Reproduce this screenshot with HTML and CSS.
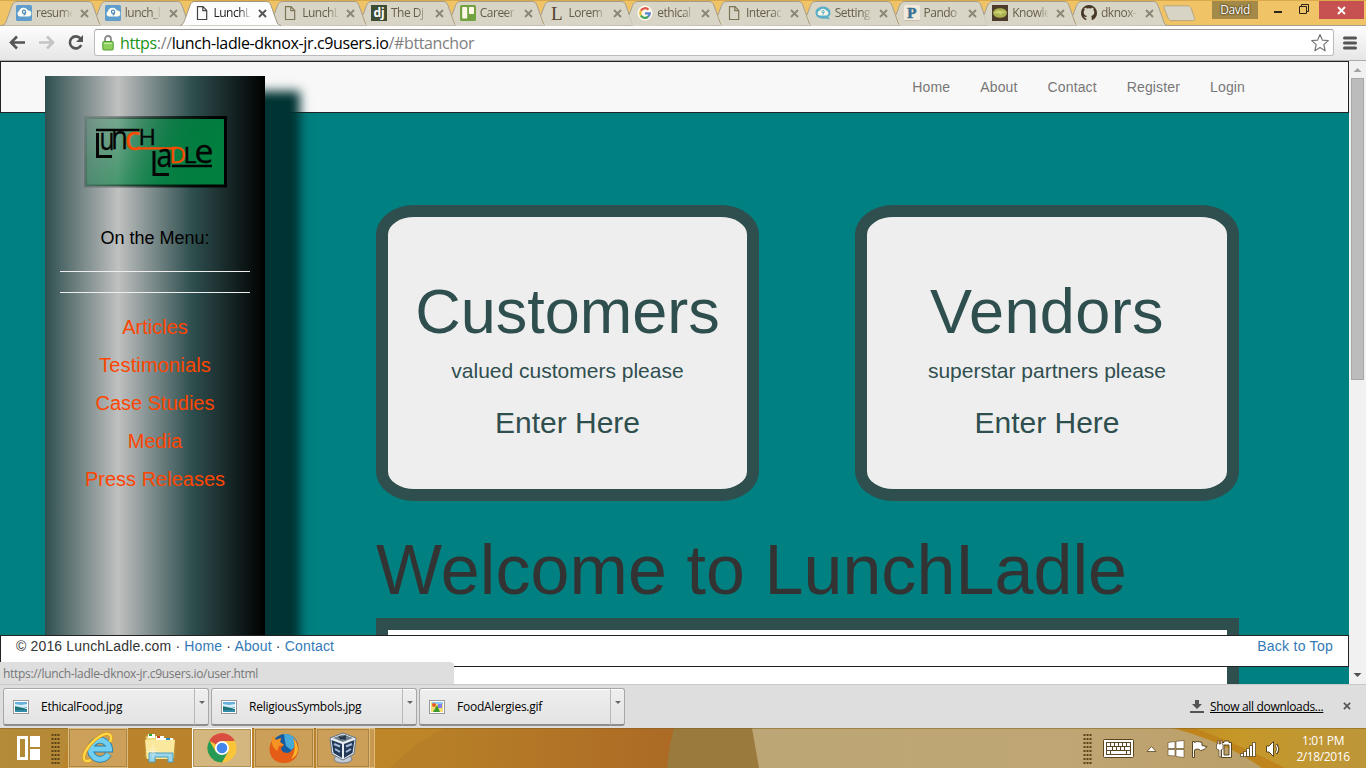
FILE: index.html
```html
<!DOCTYPE html>
<html lang="en">
<head>
<meta charset="utf-8">
<title>LunchLadle</title>
<link rel="stylesheet" href="styles.css">
</head>
<body>
<svg class="defs" width="0" height="0">
  <defs>
    <symbol id="tab-full" viewBox="0 0 101 25"><path d="M0 24.5C3 24 3.500 22 4.500 19.500L10 4.500C11 2 12 .5 15 .5H86C89 .5 90 2 91 4.500L96.500 20C97.500 23 98 24 101 24.500"/></symbol>
    <symbol id="tab-part" viewBox="0 0 101 25"><path d="M10 25L6 14 9.500 4.500C10.500 2 12 .5 15 .5H86C89 .5 90 2 91 4.500L96.500 20C97.500 23 98 24 101 24.500" stroke="none"/><path d="M6 14L9.500 4.500C10.500 2 12 .5 15 .5H86C89 .5 90 2 91 4.500L96.500 20C97.500 23 98 24 101 24.500" fill="none"/></symbol>
    <symbol id="close" viewBox="0 0 9 9"><path d="M1 1L8 8M8 1L1 8" stroke="currentColor" stroke-width="1.900"/></symbol>
    <symbol id="doc" viewBox="0 0 16 16"><path d="M3.500 1.700H9L12.700 5.500V14.500H3.500ZM8.800 1.700V5.700H12.700" fill="none" stroke="currentColor" stroke-width="1.200"/></symbol>
    <symbol id="cloud9" viewBox="0 0 16 16"><rect width="16" height="16" rx="1.500" fill="#5f9dcc"/><path d="M3.500 11.500A2.900 2.900 0 0 1 3 6.200 4.800 4.800 0 0 1 12 5.500 3 3 0 0 1 12.500 11.500Z" fill="#fffdf0"/><circle cx="8" cy="6.700" r="1.600" fill="none" stroke="#4a8abf" stroke-width="1.200"/><path d="M9.600 7C9.500 9 9 10 7.500 10" fill="none" stroke="#4a8abf" stroke-width="1.200"/></symbol>
    <symbol id="picture" viewBox="0 0 16 14"><rect x=".5" y=".5" width="15" height="13" fill="#fff" stroke="#999"/><path d="M2 2H14V8H2Z" fill="#67b3dd"/><path d="M2 4L8 5 14 4V7L8 8 2 6Z" fill="#d9eef7"/><path d="M2 6.500L6 7 14 9V12H2Z" fill="#207478"/><path d="M2 10H14V12H2Z" fill="#328baa"/></symbol>
    <symbol id="grip" viewBox="0 0 9 32"><path d="M1.500 1V32M4.500 1V32M7.500 1V32" stroke="#5c4316" stroke-width="2" stroke-dasharray="2 2"/></symbol>
  </defs>
</svg>
<div class="window">
  <header class="tabstrip">
    <div class="tabs">
      <div class="tab"><svg class="shape"><use href="#tab-full"/></svg><svg class="fav"><use href="#cloud9"/></svg><span>resume</span><svg class="x"><use href="#close"/></svg></div>
      <div class="tab"><svg class="shape"><use href="#tab-part"/></svg><svg class="fav"><use href="#cloud9"/></svg><span>lunch_l</span><svg class="x"><use href="#close"/></svg></div>
      <div class="tab active"><svg class="shape"><use href="#tab-full"/></svg><svg class="fav"><use href="#doc"/></svg><span>LunchL</span><svg class="x"><use href="#close"/></svg></div>
      <div class="tab"><svg class="shape"><use href="#tab-part"/></svg><svg class="fav"><use href="#doc"/></svg><span>LunchL</span><svg class="x"><use href="#close"/></svg></div>
      <div class="tab"><svg class="shape"><use href="#tab-part"/></svg><svg class="fav" viewBox="0 0 16 16"><rect width="16" height="16" fill="#3d4c33"/><text x="2.500" y="12" font-family="Open Sans,sans-serif" font-weight="700" font-size="12" fill="#fff">dj</text></svg><span>The Dj</span><svg class="x"><use href="#close"/></svg></div>
      <div class="tab"><svg class="shape"><use href="#tab-part"/></svg><svg class="fav" viewBox="0 0 16 16"><rect width="16" height="16" rx="1.500" fill="#72a23f"/><rect x="2.200" y="2" width="5" height="11.500" rx=".7" fill="#fff8e8"/><rect x="9" y="2" width="5" height="7" rx=".7" fill="#fff8e8"/></svg><span>Career</span><svg class="x"><use href="#close"/></svg></div>
      <div class="tab"><svg class="shape"><use href="#tab-part"/></svg><svg class="fav" viewBox="0 0 16 16"><text x="2" y="14.500" font-family="Liberation Serif,serif" font-size="19" fill="#53432f">L</text></svg><span>Lorem</span><svg class="x"><use href="#close"/></svg></div>
      <div class="tab"><svg class="shape"><use href="#tab-part"/></svg><svg class="fav" viewBox="0 0 16 16"><circle cx="8" cy="8" r="7.500" fill="#fff8ec"/><g fill="none" stroke-width="2.300"><path d="M11.400 4.600A4.800 4.800 0 0 0 3.900 5.600" stroke="#df5642"/><path d="M3.900 5.600A4.800 4.800 0 0 0 3.900 10.500" stroke="#edba32"/><path d="M3.900 10.500A4.800 4.800 0 0 0 11.200 11.600" stroke="#44a35a"/><path d="M11.200 11.600A4.800 4.800 0 0 0 12.800 8.300H8" stroke="#5586d1"/></g></svg><span>ethical</span><svg class="x"><use href="#close"/></svg></div>
      <div class="tab"><svg class="shape"><use href="#tab-part"/></svg><svg class="fav"><use href="#doc"/></svg><span>Interac</span><svg class="x"><use href="#close"/></svg></div>
      <div class="tab"><svg class="shape"><use href="#tab-part"/></svg><svg class="fav" viewBox="0 0 16 16"><path d="M8 1.500C12 1.500 15.500 4 15.500 7.500 15.500 9.500 14.700 10.800 13.300 12L15 14.500 10.500 13.500C5 14.500.5 12 .5 7.500.5 4 4 1.500 8 1.500Z" fill="#5aaec6"/><path d="M4.500 10.500A2.400 2.400 0 0 1 4.500 5.800 4 4 0 0 1 11.500 5.800 2.400 2.400 0 0 1 11.500 10.500Z" fill="#f8f4e6"/><circle cx="8" cy="6.700" r="1.200" fill="none" stroke="#5aaec6"/><path d="M9 7L8 9.500" stroke="#5aaec6"/></svg><span>Setting</span><svg class="x"><use href="#close"/></svg></div>
      <div class="tab"><svg class="shape"><use href="#tab-part"/></svg><svg class="fav" viewBox="0 0 16 16"><rect width="16" height="16" rx="2" fill="#f1e9dc"/><path d="M.5 15.500H15.500" stroke="#c8bdac"/><text x="3.200" y="13" font-family="Liberation Serif,serif" font-weight="700" font-size="15" fill="#397191" stroke="#397191" stroke-width=".6">P</text></svg><span>Pando</span><svg class="x"><use href="#close"/></svg></div>
      <div class="tab"><svg class="shape"><use href="#tab-part"/></svg><svg class="fav" viewBox="0 0 16 16"><rect width="16" height="16" fill="#4a3b2b"/><ellipse cx="8" cy="8" rx="7" ry="4.800" fill="#aab34f"/><path d="M1 8L6 5.500 15 7 10 8 9 10 7 8.500Z" fill="#ced375"/></svg><span>Knowle</span><svg class="x"><use href="#close"/></svg></div>
      <div class="tab"><svg class="shape"><use href="#tab-part"/></svg><svg class="fav" viewBox="0 0 16 16"><path d="M5.300 15.300C2.200 14.200 0 11.400 0 8A8 8 0 0 1 16 8C16 11.400 13.800 14.200 10.700 15.300V12.500C10.700 11.700 10.500 11.200 10.100 10.900 12 10.600 13.300 9.700 13.300 7.300 13.300 6.300 13 5.500 12.400 4.900 12.500 4.500 12.700 3.700 12.300 2.800 11.500 2.700 10.500 3.300 10 3.600A8 8 0 0 0 6 3.600C5.500 3.300 4.500 2.700 3.700 2.800 3.300 3.700 3.500 4.500 3.600 4.900 3 5.500 2.700 6.300 2.700 7.300 2.700 9.700 4 10.600 5.900 10.900 5.600 11.200 5.400 11.600 5.300 12 4 12.500 3.500 11.500 2.600 11 3.400 12 3.500 13.500 5.300 13.400Z" fill="#453626"/></svg><span>dknox-</span><svg class="x"><use href="#close"/></svg></div>
    </div>
    <svg class="newtab" width="33" height="17" viewBox="0 0 33 17"><path d="M1 3C.5 1.500 1 .8 3 .8H24C26 .8 27 1.500 28 3L31.500 13C32 15 31.500 15.600 29.500 15.600H9C7 15.600 6 15 5 13Z" fill="#d8d4c5" stroke="#b9a67a"/></svg>
    <div class="user">David</div>
    <svg class="winbtns" width="56" height="19" viewBox="0 0 56 19"><path d="M11 11H19" stroke="#2c2618" stroke-width="2"/><path d="M36.500 5.500H43.500V12.500H36.500ZM38.500 5V3.500H45.500V10.500H44" fill="none" stroke="#2c2618"/></svg>
    <div class="winclose"><svg width="9" height="9"><use href="#close"/></svg></div>
  </header>
  <div class="toolbar">
    <svg class="nav-icons" width="94" height="36" viewBox="0 0 94 36"><g fill="none" stroke-width="2.600"><path d="M25 17.500H12M17 11.500L11 17.500 17 23.500" stroke="#555"/><path d="M39 17.500H52M47 11.500L53 17.500 47 23.500" stroke="#c4c4c4"/><path d="M80.500 13.500A6 6 0 1 0 81.300 20" stroke="#555"/></g><path d="M83 10V17H76Z" fill="#555"/></svg>
    <div class="omnibox">
      <svg width="12" height="16" viewBox="0 0 12 16"><path d="M3 8V4A3 3 0 0 1 9 4V8" fill="none" stroke="#8a8a8a" stroke-width="1.800"/><rect x=".8" y="6.500" width="10.400" height="8.500" rx="1" fill="#8fcf5c" stroke="#4c9d35"/><path d="M2 8.500H10" stroke="#c6ecaa"/></svg>
      <div class="url"><span class="scheme">https</span><span class="dim">://</span>lunch-ladle-dknox-jr.c9users.io<span class="dim">/#bttanchor</span></div>
      <svg class="star" width="20" height="20" viewBox="0 0 20 20"><path d="M10 1.500L12.400 7.200 18.300 7.600 13.800 11.600 15.200 17.800 10 14.500 4.800 17.800 6.200 11.600 1.700 7.600 7.600 7.200Z" fill="#fff" stroke="#777" stroke-width="1.200" stroke-linejoin="round"/></svg>
    </div>
    <svg class="burger" width="14" height="14"><path d="M1.500 2H12.500M1.500 7H12.500M1.500 12H12.500" stroke="#555" stroke-width="3" stroke-linecap="round"/></svg>
  </div>
  <div class="viewport">
    <div class="page">
      <nav class="navbar"><a>Home</a><a>About</a><a>Contact</a><a>Register</a><a>Login</a></nav>
      <main class="content">
        <div class="cards">
          <section class="card"><h1>Customers</h1><p>valued customers please</p><h2>Enter Here</h2></section>
          <section class="card vendors"><h1>Vendors</h1><p>superstar partners please</p><h2>Enter Here</h2></section>
        </div>
        <h1 class="welcome">Welcome to LunchLadle</h1>
        <div class="panel"></div>
      </main>
      <aside class="sidebar">
        <svg class="logo" width="144" height="73" viewBox="0 0 144 73">
          <defs>
            <linearGradient id="lg" x1="0" y1="0" x2="1" y2=".25"><stop offset="0" stop-color="#008442" stop-opacity=".12"/><stop offset=".3" stop-color="#007f3f" stop-opacity=".48"/><stop offset=".7" stop-color="#008040" stop-opacity=".9"/><stop offset="1" stop-color="#00803f"/></linearGradient>
            <linearGradient id="lb" gradientUnits="userSpaceOnUse" x1="0" y1="0" x2="144" y2="30"><stop offset="0" stop-opacity=".08"/><stop offset=".5" stop-opacity=".55"/><stop offset=".9" stop-opacity="1"/></linearGradient>
          </defs>
          <rect x="1.500" y="2.500" width="140" height="68.500" fill="url(#lg)" stroke="url(#lb)" stroke-width="3"/>
          <g fill="none" stroke="#050505" stroke-width="2.300"><path d="M12 15H55.500"/><path d="M88 51H128"/></g>
          <g fill="none" stroke="#050505" stroke-width="3"><path d="M13.500 18V41.500H28"/><path d="M70 36V59.500H85"/></g>
          <path d="M53 33.300H92" stroke="#ff4a00" stroke-width="2.300"/>
          <g font-family="Open Sans,sans-serif" font-size="22.500" fill="#050505" stroke="#050505" stroke-width=".35">
            <text x="15.500" y="34.500" textLength="15" lengthAdjust="spacingAndGlyphs" font-size="31">u</text><text x="27" y="34" font-size="32" textLength="17" lengthAdjust="spacingAndGlyphs">n</text>
            <text x="41" y="35" font-size="32" fill="#ff4a00" stroke="#ff4a00" textLength="15.500" lengthAdjust="spacingAndGlyphs">c</text><text x="54.500" y="29.500" textLength="17.500" lengthAdjust="spacingAndGlyphs">H</text>
            <text x="72.500" y="52" font-size="32" textLength="16" lengthAdjust="spacingAndGlyphs">a</text><text x="85.500" y="48" fill="#ff4a00" stroke="#ff4a00" textLength="16.500" lengthAdjust="spacingAndGlyphs">D</text>
            <text x="99.500" y="47.500" textLength="13" lengthAdjust="spacingAndGlyphs">L</text><text x="110.500" y="47.500" font-size="32" textLength="19" lengthAdjust="spacingAndGlyphs">e</text>
          </g>
        </svg>
        <h4>On the Menu:</h4>
        <hr><hr>
        <ul><li>Articles</li><li class="wide">Testimonials</li><li>Case Studies</li><li>Media</li><li>Press Releases</li></ul>
      </aside>
      <footer class="footer"><p>© 2016 LunchLadle.com · <a>Home</a> · <a>About</a> · <a>Contact</a></p><a class="top">Back to Top</a></footer>
      <div class="status"><span>https://lunch-ladle-dknox-jr.c9users.io/user.html</span></div>
    </div>
    <div class="scrollbar">
      <svg width="17" height="17"><path d="M4.500 11L8.500 7 12.500 11Z" fill="#a3a3a3"/></svg>
      <div class="thumb"></div>
      <svg class="down" width="17" height="17"><path d="M4.500 6L8.500 10 12.500 6Z" fill="#505050"/></svg>
    </div>
  </div>
  <div class="downloads">
    <div class="dl"><svg width="16" height="14"><use href="#picture"/></svg><span>EthicalFood.jpg</span><i></i></div>
    <div class="dl"><svg width="16" height="14"><use href="#picture"/></svg><span>ReligiousSymbols.jpg</span><i></i></div>
    <div class="dl"><svg width="16" height="14" viewBox="0 0 16 14"><rect x=".5" y=".5" width="15" height="13" fill="#fff" stroke="#999"/><rect x="2" y="2" width="12" height="10" fill="#f6de75"/><path d="M3 2H14V4H3Z" fill="#8fc8f0"/><path d="M9 4H13V8H9Z" fill="#7f7ff0"/><circle cx="5" cy="5" r="2" fill="#eb5b23"/><path d="M4 12L8 5 11 12Z" fill="#3e9929"/></svg><span>FoodAlergies.gif</span><i></i></div>
    <svg class="dlarrow" width="14" height="14"><path d="M5 0H9V4H12L7 9 2 4H5ZM0 11H14V13H0Z" fill="#555"/></svg>
    <span class="showall">Show all downloads...</span>
    <svg class="dlclose" width="8" height="8"><use href="#close"/></svg>
  </div>
  <div class="taskbar">
    <svg class="wallpaper" width="1366" height="40" viewBox="0 0 1366 40">
      <defs>
        <linearGradient id="w1" gradientUnits="userSpaceOnUse" x1="0" y1="0" x2="674" y2="0"><stop offset="0" stop-color="#b48935"/><stop offset=".1" stop-color="#ba842d"/><stop offset=".65" stop-color="#b77f27"/><stop offset="1" stop-color="#ac6a25"/></linearGradient>
        <linearGradient id="w2"><stop offset="0" stop-color="#bca675"/><stop offset=".5" stop-color="#bfa674"/><stop offset="1" stop-color="#b99b61"/></linearGradient>
        <linearGradient id="w3"><stop offset="0" stop-color="#c28c20"/><stop offset=".35" stop-color="#c59829"/><stop offset="1" stop-color="#bd963a"/></linearGradient>
      </defs>
      <rect width="1366" height="40" fill="url(#w1)"/><path d="M0 0H74Q65 17 62 40H0Z" fill="#b38c3c" opacity=".6"/><path d="M375 0H445Q410 18 390 40H375Z" fill="#c38b2a" opacity=".5"/>
      <path d="M674 0H760V40H667Q669 18 674 0Z" fill="#9b7b3d"/><path d="M752 0H1366V40H759Z" fill="url(#w2)"/>
      <path d="M1173 0H1366V40H1262Q1228 15 1173 0Z" fill="url(#w3)"/><path d="M1173 0H1194Q1236 15 1285 40H1262Q1228 15 1173 0Z" fill="#bf841c"/>
      <path d="M0 .5H1366" stroke="#806020" opacity=".5"/>
    </svg>
    <svg class="start" width="24" height="24"><path d="M1.500 1.500H9.500V22.500H1.500Z" fill="none" stroke="#fff" stroke-width="3"/><path d="M13 0H23V11H13ZM13 13H23V24H13Z" fill="#fff"/></svg>
    <svg class="grip" width="9" height="32"><use href="#grip"/></svg>
    <div class="apps">
      <div class="app"><svg width="32" height="32" viewBox="0 0 32 32"><path d="M26.500 22A9.500 9.500 0 1 1 27.500 17H11" fill="none" stroke="#237fb3" stroke-width="6.800"/><path d="M26.500 22A9.500 9.500 0 1 1 27.500 17H11" fill="none" stroke="#72cff0" stroke-width="5"/><path d="M9 28C0 32 .5 24 5 17 11 7 24-1 28 3 30 5 29 8 28 10" fill="none" stroke="#d38d0c" stroke-width="3.600"/><path d="M9 28C0 32 .5 24 5 17 11 7 24-1 28 3 30 5 29 8 28 10" fill="none" stroke="#ffd849" stroke-width="2.500"/></svg></div>
      <div class="app plain"><svg width="32" height="32" viewBox="0 0 32 32"><path d="M2 4H12L14 7H30V26H2Z" fill="#eedb80" stroke="#c9a84c"/><path d="M4 2H11V6H4ZM12 4H20V8H12ZM20 6H29V9H20Z" fill="#fff"/><path d="M5 2H8V4H5Z" fill="#27a632"/><path d="M13 4H16V6H13Z" fill="#ca3e25"/><path d="M22 6H26V8H22Z" fill="#258bca"/><path d="M1 8H31L29 27H3Z" fill="#fae99d"/><path d="M5 30V21H29V30H24V25H11V30Z" fill="#9bd5ea" stroke="#4b9fc2"/><path d="M9 13V26M3 19.500H15M6 16L12 23M12 16L6 23" stroke="#fff" opacity=".5"/></svg></div>
      <div class="app current"><svg width="30" height="30" viewBox="0 0 30 30"><circle cx="15" cy="15" r="14.500" fill="#fbc53a"/><path d="M15 15L2.400 7.700A14.500 14.500 0 0 1 27.500 7.700H15Z" fill="#d94e41"/><path d="M15 15L21 18.700 15 29.500A14.500 14.500 0 0 1 2.400 7.700L9 19Z" fill="#279b55"/><path d="M3 7C8-2 23-2 27.500 8H15Z" fill="#d94e41"/><circle cx="15" cy="15" r="7" fill="#fff"/><circle cx="15" cy="15" r="5.300" fill="#4387ec"/></svg></div>
      <div class="app"><svg width="30" height="30" viewBox="0 0 30 30"><circle cx="16" cy="14" r="13" fill="#155ca1"/><path d="M15 1C22 0 29 6 28 13L22 17 17 13 16 8Z" fill="#47a9d7"/><path d="M3 3L7 7 12 5 11 9 15 12 12 15C12 20 20 22 23 17 26 15 26 10 24 5L28 9 29.500 14C30 24 24 30 15 30 6 30 .5 24 .5 16 .5 12 2 9 3 8Z" fill="#e55c16"/><path d="M24 5C32 14 29 23 22 26 26 21 27 12 24 5Z" fill="#f9b72c"/><path d="M3 3L7 7 12 5 11 9 15 12 10 13 8 18C4 15 2 11 3 3Z" fill="#f59324"/></svg></div>
      <div class="app vbox"><svg width="30" height="32" viewBox="0 0 30 32"><ellipse cx="15" cy="27" rx="9" ry="4" fill="#c3cad3" stroke="#737e8e"/><path d="M2 6L15 1 28 6 26 22 15 28 4 22Z" fill="#e6edf2" stroke="#65748a"/><path d="M5 6L15 2.500 25 6 15 10Z" fill="#71818d"/><path d="M3.500 8L14 12V26L5.500 21ZM26.500 8L16 12V26L24.500 21Z" fill="#223958"/><path d="M6 12L12 14.500M7 17L12 20M24 12L18 14.500M23 17L18 20" stroke="#a8bfdc" stroke-width="2"/><path d="M11 5L18 7M18 4L12 7" stroke="#263849" stroke-width="2"/></svg></div>
      <div class="stack"></div>
    </div>
    <svg class="tray" width="200" height="40" viewBox="0 0 200 40">
      <use href="#grip" x="0" y="5" width="9" height="32"/>
      <g stroke="#5b4622" fill="#fff">
        <rect x="20.500" y="11.500" width="30" height="18" rx="1"/>
        <g fill="#5b4622" stroke="none"><rect x="23" y="14" width="25" height="13"/></g>
        <path d="M24 15H27V18H24ZM28 15H31V18H28ZM32 15H35V18H32ZM36 15H39V18H36ZM40 15H43V18H40ZM44 15H47V18H44ZM24 19H29V22H24ZM30 19H33V22H30ZM34 19H37V22H34ZM38 19H41V22H38ZM42 19H47V22H42ZM24 23H27V26H24ZM28 23H43V26H28ZM44 23H47V26H44Z" stroke="none"/>
        <path d="M64 23.500L68.500 18.500 73 23.500Z" stroke-width=".8"/>
        <path d="M85 14.500L92 13.500V20.500H85ZM93 13.300L101 12.500V20.500H93ZM85 21.500H92V28L85 27.500ZM93 21.500H101V29.500L93 28.500Z" stroke-width=".6"/>
        <path d="M109.500 13.500V29.500H111.500V22C114 20.500 116 21 117.500 22.500 120 22.500 122 21 124 18.500L119 17.500V14.500C116 13.500 113.500 13 111.500 14.500V13.500Z"/>
        <path d="M141 14.500V13H146V14.500H148.500V29.500H138.500V14.500ZM141 17V27H146V17Z" fill-rule="evenodd"/><path d="M134.500 12.500V16H133.500V21L136 22V29H138V22L140 21V16H139V12.500H137.500V16H136V12.500Z" stroke-width=".7"/>
        <path d="M157.500 25.500H160.500V28.500H157.500ZM160.500 23.500H163.500V28.500H160.500ZM163.500 20.500H166.500V28.500H163.500ZM166.500 17.500H169.500V28.500H166.500ZM169.500 14.500H172.500V28.500H169.500Z" stroke-width=".8"/>
        <path d="M183.500 18H186L190.500 13.500V28.500L186 24H183.500Z"/><path d="M193 16.500Q196.500 21 193 25.500" fill="none" stroke-width="3"/><path d="M193 17Q196 21 193 25" fill="none" stroke="#fff" stroke-width="1.200"/>
      </g>
    </svg>
    <div class="clock"><span>1:01 PM</span><span>2/18/2016</span></div>
  </div>
</div>
</body>
</html>
```
FILE: styles.css
```css
* { box-sizing: border-box; }
body { margin: 0; overflow: hidden; font-family: "Liberation Sans", Arial, sans-serif; }
h1, h2, h4, p, ul { margin: 0; padding: 0; font-weight: 400; }
.defs { position: absolute; }
.window { width: 1366px; height: 768px; display: flex; flex-direction: column; }

/* Tabs */
.tabstrip { height: 25px; flex: none; display: flex; align-items: flex-start; background: #f0c466; border-top: 1px solid #d9a94a; font-family: "Open Sans", sans-serif; position: relative; }
.tabs { display: flex; padding-left: 2px; width: 1163px; flex: none; }
.tab { position: relative; width: 100.75px; height: 24px; margin-right: -12px; flex: none; display: flex; align-items: center; padding: 0 0 0 14px; color: #8c8677; }
.shape { position: absolute; left: 0; top: 0; width: 101px; height: 25px; fill: #d9d5c6; stroke: #a49e8e; }
.fav, .tab span, .x { position: relative; flex: none; }
.fav { width: 16px; height: 16px; color: #7d7456; }
.tab span { margin-left: 4px; width: 37px; overflow: hidden; white-space: nowrap; font-size: 12px; line-height: 18px; letter-spacing: -.5px; color: #665d49; -webkit-mask-image: linear-gradient(90deg, #000 70%, transparent); mask-image: linear-gradient(90deg, #000 70%, transparent); }
.x { width: 9px; height: 9px; margin-left: 7px; }
.tab.active { z-index: 2; color: #555; }
.active .shape { fill: #fdfdfd; stroke: #a09883; }
.active .fav { color: #444; }
.tab.active span { color: #222; }
.newtab { margin: 4px 0 0; flex: none; }
.user { margin: 0 0 0 16px; width: 46px; height: 18px; background: #a48a49; color: #fff; font-size: 12px; line-height: 17px; text-align: center; letter-spacing: -.4px; text-shadow: 0 0 2px #3c2d10, 0 0 2px #3c2d10; }
.winbtns { margin-left: 5px; }
.winclose { width: 45px; height: 18px; background: #c75050; color: #fff; display: flex; justify-content: center; align-items: center; }

/* Toolbar */
.toolbar { height: 36px; flex: none; display: flex; align-items: flex-start; background: linear-gradient(#fdfdfd, #e6e6e6); border-bottom: 1px solid #aaa; border-top: 1px solid #a6a08c; }
.nav-icons { margin-top: -1px; }
.omnibox { margin-top: 3px; width: 1240px; height: 27px; display: flex; align-items: center; padding: 0 3px 0 7px; background: #fff; border: 1px solid #bbb; border-top-color: #999; border-radius: 3px; }
.url { flex: 1; margin-left: 6px; font: 16px/24px "Open Sans", sans-serif; letter-spacing: -.37px; color: #000; white-space: nowrap; }
.scheme { color: #199319; }
.dim { color: #808080; }
.burger { margin: 10px 0 0 9px; }

/* Page */
.viewport { height: 623px; flex: none; display: flex; }
.page { position: relative; width: 1349px; height: 623px; overflow: hidden; background: #008080; }
.navbar { height: 52px; border: 1px solid #222; background: #f8f8f8; display: flex; justify-content: flex-end; gap: 30px; padding: 0 103px 0 0; font-size: 14px; line-height: 50px; letter-spacing: .14px; color: #777; }
.content { padding: 92px 110px 0 376px; }
.cards { display: flex; justify-content: space-between; }
.card { width: 384px; height: 296px; border: 12px solid #2f4f4f; border-radius: 10%; background: #eee; color: #2f4f4f; text-align: center; padding-top: 60px; }
.card:first-child { width: 383px; }
.card h1 { font-size: 63px; line-height: 69px; }
.vendors h1 { letter-spacing: .4px; }
.card p { margin-top: 10px; font-size: 21px; line-height: 30px; }
.card h2 { margin-top: 20px; font-size: 30px; line-height: 33px; }
.welcome { margin-top: 31px; font-size: 70px; line-height: 77px; letter-spacing: .06px; color: #333; white-space: nowrap; }
.panel { margin-top: 9px; height: 200px; border: 12px solid #2f4f4f; background: #fff; }
.sidebar { position: absolute; left: 45px; top: 15px; width: 220px; height: 640px; padding: 39px 15px 0; text-align: center; background: linear-gradient(to right, #2f4f4f, #c0c0c0 33.3%, #2f4f4f 66.6%, #000); box-shadow: 35px 15px 10px #003333; }
.logo { display: block; margin: 0 0 0 24px; }
.sidebar h4 { margin-top: 40px; font-size: 18px; line-height: 20px; color: #000; }
.sidebar hr { margin: 23px 0 0; border: 0; border-top: 1px solid #eee; }
.sidebar hr + hr { margin-top: 20px; }
.sidebar ul { list-style: none; margin-top: 15px; font-size: 20px; line-height: 38px; color: #ff4500; }
.wide { letter-spacing: .15px; }
.footer { position: absolute; left: 0; right: 0; top: 574px; height: 32px; display: flex; justify-content: space-between; border: 1px solid #222; background: #fff; padding: 0 15px; font-size: 14px; line-height: 20px; letter-spacing: .16px; color: #333; }
.footer a { color: #337ab7; }
.footer .top { letter-spacing: .27px; }
.status { position: absolute; left: 0; top: 601px; width: 454px; height: 22px; background: #dedede; border-radius: 0 4px 0 0; padding-left: 3px; font: 12px/24px "Open Sans", sans-serif; letter-spacing: -.31px; color: #777; white-space: nowrap; }
.scrollbar { width: 17px; height: 623px; background: #f1f1f1; display: flex; flex-direction: column; }
.thumb { width: 13px; height: 302px; margin: 0 2px; background: #bcbcbc; border: 1px solid #a8a8a8; }
.down { margin-top: auto; }

/* Downloads */
.downloads { height: 44px; flex: none; display: flex; padding: 3px 0 0 3px; gap: 2px; background: #dedede; border-top: 1px solid #c8c8c8; font: 12px/18px "Open Sans", sans-serif; color: #000; }
.dl { width: 206px; height: 38px; display: flex; align-items: center; padding-left: 9px; border: 1px solid #a8a8a8; border-bottom: 2px solid #8d8d8d; border-radius: 3px; background: linear-gradient(#efefef, #e3e3e3); box-shadow: inset 0 1px #fff; letter-spacing: -.24px; }
.dl span { margin-left: 12px; flex: 1; }
.dl i { width: 14px; height: 36px; border-left: 1px solid #b8b8b8; display: flex; justify-content: center; padding-top: 12px; }
.dl i::before { content: ""; border: 3px solid transparent; border-top-color: #666; height: 0; }
.dlarrow { margin: 12px 0 0 563px; }
.showall { margin: 10px 0 0 4px; width: 115px; text-decoration: underline; letter-spacing: -.32px; white-space: nowrap; }
.dlclose { margin: 14px 0 0 16px; color: #555; }

/* Taskbar */
.taskbar { position: relative; height: 40px; flex: none; display: flex; }
.taskbar > * { position: relative; flex: none; }
.taskbar > .wallpaper { position: absolute; left: 0; top: 0; }
.start { margin: 8px 0 0 17px; }
.grip { margin: 5px 0 0 10px; }
.apps { display: flex; margin-left: 8px; width: 1015px; }
.app { width: 60px; height: 40px; margin-right: 2px; display: flex; align-items: center; justify-content: center; border: 1px solid #dcbb7c; background: rgba(224, 190, 136, .5); outline: 1px solid rgba(110, 77, 22, .35); outline-offset: -2px; }
.app.plain { background: none; border-color: transparent; outline: 0; }
.app.current { border: 1px solid #fff; background: rgba(224, 204, 164, .7); }
.app.vbox { width: 54px; margin-right: 0; }
.stack { width: 5px; height: 40px; border: 1px solid #dcbb7c; border-left: 0; background: rgba(224, 190, 136, .4); }
.clock { width: 80px; display: flex; flex-direction: column; align-items: center; padding-top: 5px; color: #fff; font: 12px/16px "Open Sans", sans-serif; letter-spacing: -.4px; }
```
